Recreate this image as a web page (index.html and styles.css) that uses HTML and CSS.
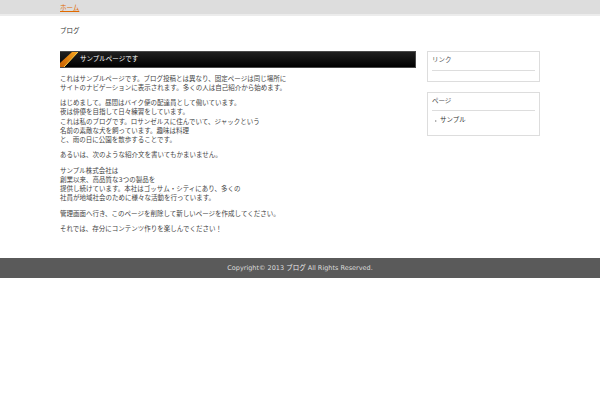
FILE: index.html
```html
<!DOCTYPE html>
<html lang="ja">
<head>
<meta charset="utf-8">
<title>サンプルページ</title>
<link rel="stylesheet" href="styles.css">
</head>
<body>
<header class="topbar">
  <div class="wrap">
    <a class="top-link" href="#">ホーム</a>
  </div>
</header>

<div class="wrap site-title">ブログ</div>

<div class="wrap columns">
  <main class="main">
    <h1 class="entry-title">
      <svg class="stripe" width="18" height="15" viewBox="0 0 18 15">
        <defs>
          <linearGradient id="og" x1="0" y1="1" x2="1" y2="0">
            <stop offset="0" stop-color="#c85f00"/>
            <stop offset="1" stop-color="#f7a520"/>
          </linearGradient>
        </defs>
        <polygon points="0,15 0,11 12,0 18,0 4,15" fill="url(#og)"/>
        <line x1="4" y1="15" x2="18" y2="0" stroke="#ffd24a" stroke-width="1"/>
      </svg>
      <span class="title-text">サンプルページです</span>
    </h1>
    <div class="entry">
      <p>これはサンプルページです。ブログ投稿とは異なり、固定ページは同じ場所に<br>サイトのナビゲーションに表示されます。多くの人は自己紹介から始めます。</p>
      <p>はじめまして。昼間はバイク便の配達員として働いています。<br>夜は俳優を目指して日々練習をしています。<br>これは私のブログです。ロサンゼルスに住んでいて、ジャックという<br>名前の素敵な犬を飼っています。趣味は料理<br>と、雨の日に公園を散歩することです。</p>
      <p>あるいは、次のような紹介文を書いてもかまいません。</p>
      <p>サンプル株式会社は<br>創業以来、高品質な3つの製品を<br>提供し続けています。本社はゴッサム・シティにあり、多くの<br>社員が地域社会のために様々な活動を行っています。</p>
      <p>管理画面へ行き、このページを削除して新しいページを作成してください。</p>
      <p>それでは、存分にコンテンツ作りを楽しんでください！</p>
    </div>
  </main>

  <aside class="sidebar">
    <section class="widget">
      <h2 class="widget-title">リンク</h2>
    </section>
    <section class="widget">
      <h2 class="widget-title">ページ</h2>
      <ul class="widget-list">
        <li><span class="bullet"></span><a href="#">サンプル</a></li>
      </ul>
    </section>
  </aside>
</div>

<footer class="footer">Copyright© 2013 <a href="#">ブログ</a> All Rights Reserved.</footer>
</body>
</html>
```

FILE: styles.css
```css
html, body {
  margin: 0;
  padding: 0;
  background: #ffffff;
}

body {
  font-family: "DejaVu Sans", "Noto Sans CJK JP", sans-serif;
  font-size: 6.5px;
  line-height: 9.3px;
  color: #444444;
}

a {
  color: inherit;
  text-decoration: none;
}

.wrap {
  width: 480px;
  margin: 0 auto;
}

/* top bar */
.topbar {
  height: 14px;
  background: #dddddd;
  border-bottom: 2px solid #ececec;
}

.topbar .wrap {
  height: 14px;
  line-height: 16px;
}

.top-link {
  color: #e06a00;
  text-decoration: underline;
}

/* site title */
.site-title {
  padding-top: 11px;
  color: #333333;
}

/* columns */
.columns {
  display: flex;
  gap: 11px;
  align-items: flex-start;
  margin-top: 15px;
  padding-bottom: 18px;
}

.main {
  width: 356px;
}

.entry-title {
  margin: 0;
  height: 15px;
  display: flex;
  align-items: center;
  gap: 2px;
  background: linear-gradient(#202020, #000000);
  border: 1px solid #4a4a4a;
  border-left: none;
  font-size: 6.5px;
  font-weight: normal;
  color: #ffffff;
}

.stripe {
  display: block;
  flex: none;
}

.entry p {
  margin: 5.8px 0;
}

.entry p:first-child {
  margin-top: 6.5px;
}

/* sidebar */
.sidebar {
  width: 113px;
  display: flex;
  flex-direction: column;
  gap: 10px;
}

.widget {
  border: 1px solid #dddddd;
  padding: 4px 4px 10px;
}

.widget-title {
  margin: 0;
  padding-bottom: 4px;
  border-bottom: 1px solid #dddddd;
  font-size: 6.5px;
  font-weight: normal;
  color: #555555;
}

.widget-list {
  list-style: none;
  margin: 5px 0 0;
  padding: 0 0 0 3px;
}

.widget-list li {
  display: flex;
  align-items: center;
  gap: 3px;
  color: #333333;
}

.bullet {
  width: 0;
  height: 0;
  border-top: 1.5px solid transparent;
  border-bottom: 1.5px solid transparent;
  border-left: 2px solid #999999;
}

/* footer */
.footer {
  height: 20px;
  line-height: 20px;
  text-align: center;
  background: #5a5a5a;
  color: #dddddd;
}

.footer a {
  color: #eeeeee;
}
```
